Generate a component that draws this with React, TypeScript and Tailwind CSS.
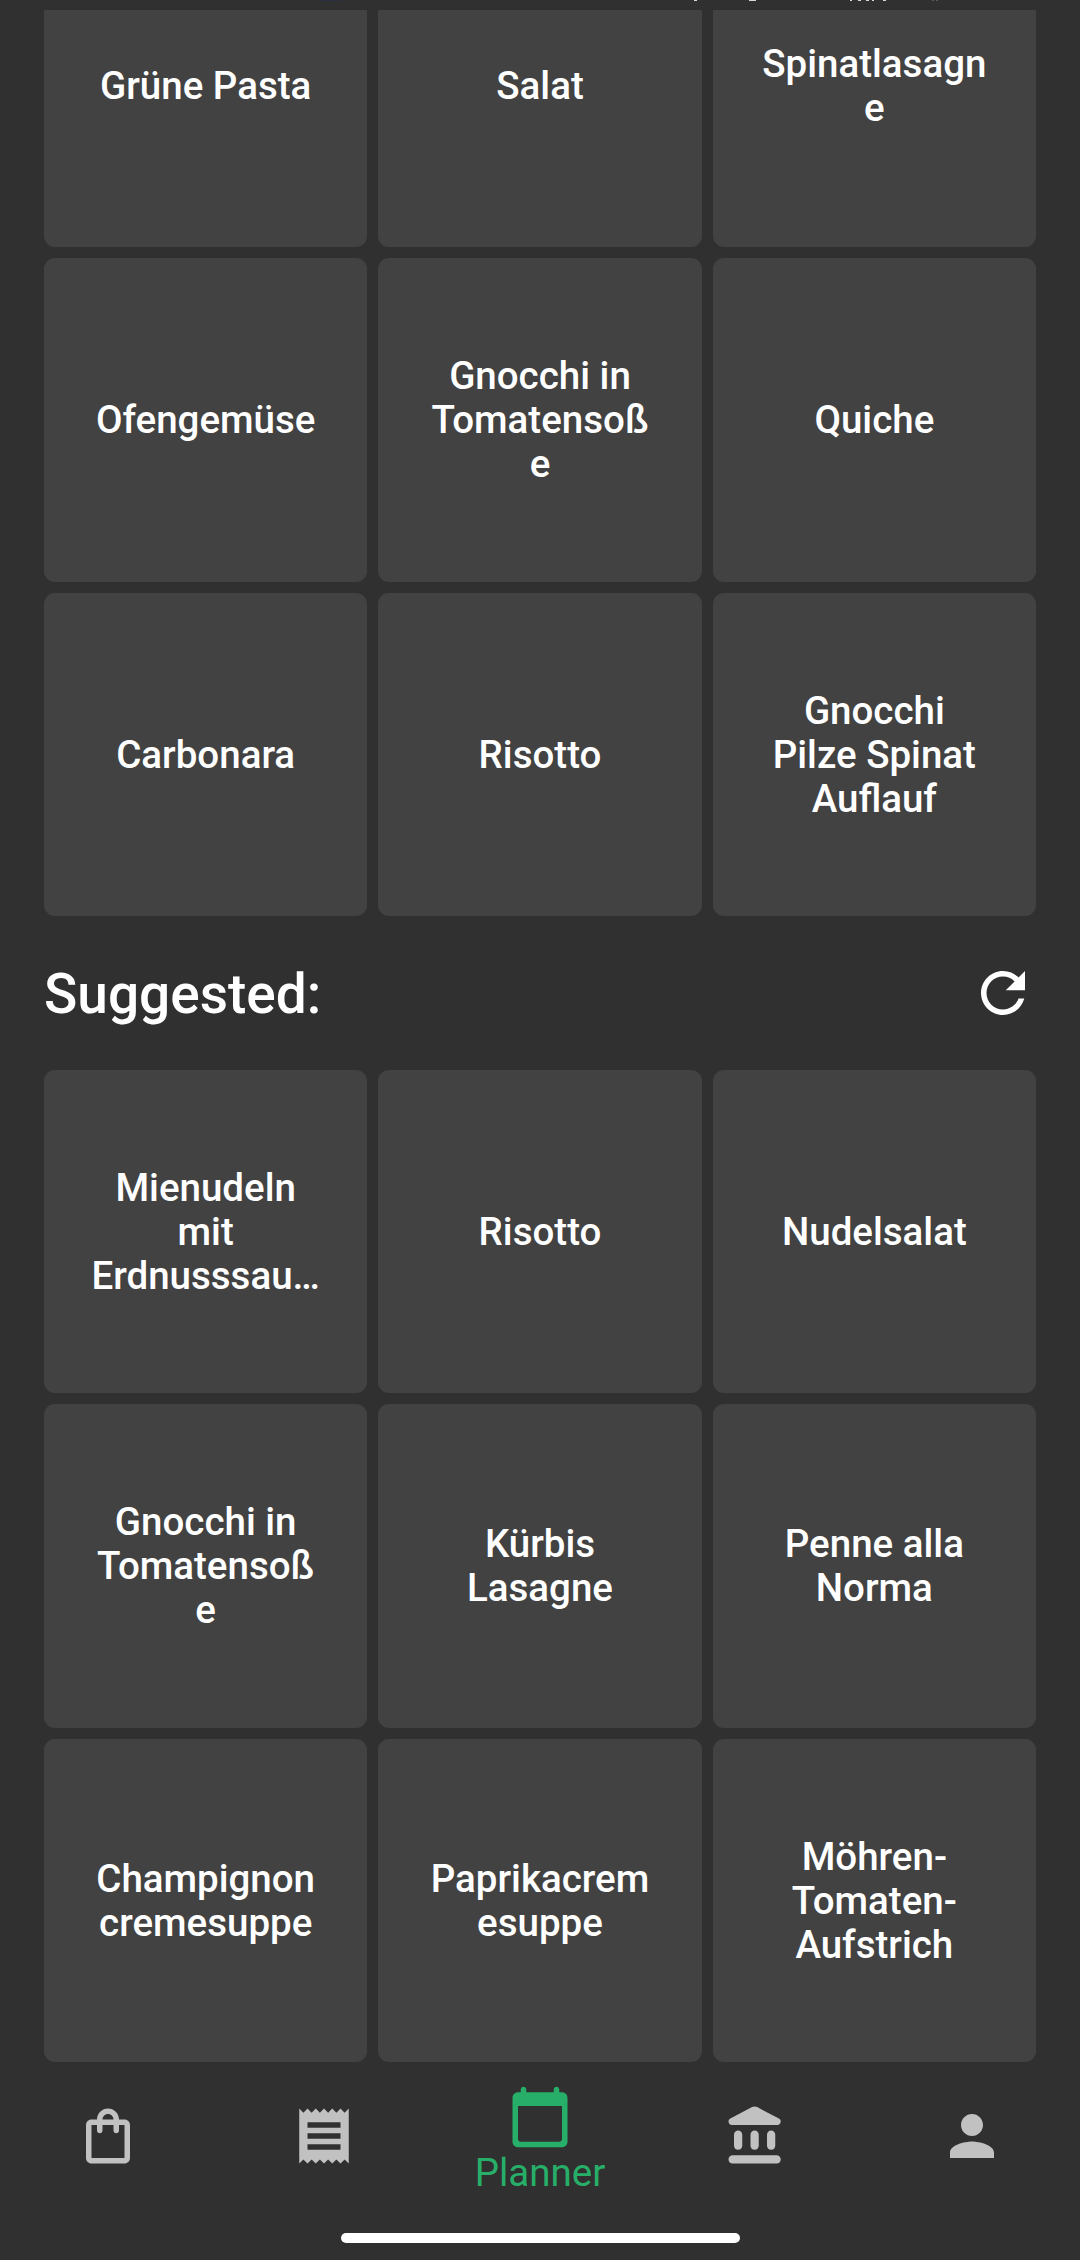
import React from "react";

const RECENT: string[][] = [
  ["Grüne Pasta"],
  ["Salat"],
  ["Spinatlasagn", "e"],
  ["Ofengemüse"],
  ["Gnocchi in", "Tomatensoß", "e"],
  ["Quiche"],
  ["Carbonara"],
  ["Risotto"],
  ["Gnocchi", "Pilze Spinat", "Auflauf"],
];

const SUGGESTED: string[][] = [
  ["Mienudeln", "mit", "Erdnusssau…"],
  ["Risotto"],
  ["Nudelsalat"],
  ["Gnocchi in", "Tomatensoß", "e"],
  ["Kürbis", "Lasagne"],
  ["Penne alla", "Norma"],
  ["Champignon", "cremesuppe"],
  ["Paprikacrem", "esuppe"],
  ["Möhren-", "Tomaten-", "Aufstrich"],
];

function Icon({ d, className = "" }: { d: string; className?: string }) {
  return (
    <svg viewBox="0 0 24 24" fill="currentColor" className={`size-[66px] shrink-0 ${className}`}>
      <path d={d} />
    </svg>
  );
}

const REFRESH =
  "M17.65 6.35C16.2 4.9 14.21 4 12 4c-4.42 0-7.99 3.58-7.99 8s3.57 8 7.99 8c3.73 0 6.84-2.55 7.73-6h-2.08c-.82 2.33-3.04 4-5.65 4-3.31 0-6-2.69-6-6s2.69-6 6-6c1.66 0 3.14.69 4.22 1.78L13 11h7V4l-2.35 2.35z";
const BAG =
  "M18 6h-2c0-2.21-1.79-4-4-4S8 3.79 8 6H6c-1.1 0-2 .9-2 2v12c0 1.1.9 2 2 2h12c1.1 0 2-.9 2-2V8c0-1.1-.9-2-2-2zm-6-2c1.1 0 2 .9 2 2h-4c0-1.1.9-2 2-2zm6 16H6V8h2v2c0 .55.45 1 1 1s1-.45 1-1V8h4v2c0 .55.45 1 1 1s1-.45 1-1V8h2v12z";
const RECEIPT =
  "M18 17H6v-2h12v2zm0-4H6v-2h12v2zm0-4H6V7h12v2zM3 22l1.5-1.5L6 22l1.5-1.5L9 22l1.5-1.5L12 22l1.5-1.5L15 22l1.5-1.5L18 22l1.5-1.5L21 22V2l-1.5 1.5L18 2l-1.5 1.5L15 2l-1.5 1.5L12 2l-1.5 1.5L9 2 7.5 3.5 6 2 4.5 3.5 3 2v20z";
const CALENDAR =
  "M20 3h-1V2c0-.55-.45-1-1-1s-1 .45-1 1v1H7V2c0-.55-.45-1-1-1s-1 .45-1 1v1H4c-1.1 0-2 .9-2 2v16c0 1.1.9 2 2 2h16c1.1 0 2-.9 2-2V5c0-1.1-.9-2-2-2zm-1 18H5c-.55 0-1-.45-1-1V8h16v12c0 .55-.45 1-1 1z";
const BANK =
  "M4 11.5v4c0 .83.67 1.5 1.5 1.5S7 16.33 7 15.5v-4c0-.83-.67-1.5-1.5-1.5S4 10.67 4 11.5zm6 0v4c0 .83.67 1.5 1.5 1.5s1.5-.67 1.5-1.5v-4c0-.83-.67-1.5-1.5-1.5s-1.5.67-1.5 1.5zM3.5 22h16c.83 0 1.5-.67 1.5-1.5s-.67-1.5-1.5-1.5h-16c-.83 0-1.5.67-1.5 1.5S2.67 22 3.5 22zM16 11.5v4c0 .83.67 1.5 1.5 1.5s1.5-.67 1.5-1.5v-4c0-.83-.67-1.5-1.5-1.5s-1.5.67-1.5 1.5zM10.57 1.49l-7.9 4.16c-.41.21-.67.64-.67 1.1C2 7.44 2.56 8 3.25 8h16.51C20.44 8 21 7.44 21 6.75c0-.46-.26-.89-.67-1.1l-7.9-4.16c-.58-.31-1.28-.31-1.86 0z";
const PERSON =
  "M12 12c2.21 0 4-1.79 4-4s-1.79-4-4-4-4 1.79-4 4 1.79 4 4 4zm0 2c-2.67 0-8 1.34-8 4v2h16v-2c0-2.66-5.33-4-8-4z";

function RecipeGrid({ items }: { items: string[][] }) {
  return (
    <div className="grid grid-cols-3 gap-[11px]">
      {items.map((lines, i) => (
        <div
          key={i}
          className="flex aspect-square flex-col items-center justify-center rounded-[11px] bg-[#424242] pt-[0.8px] text-[38.5px] leading-[44px] font-medium whitespace-nowrap"
        >
          {lines.map((line) => (
            <span key={line}>{line}</span>
          ))}
        </div>
      ))}
    </div>
  );
}

export default function App() {
  return (
    <div className="flex h-[2260px] w-[1080px] flex-col overflow-hidden bg-[#303030] font-[Roboto,sans-serif] text-white">
      {/* Lower edge of the status bar's marks, almost fully scrolled off */}
      <svg viewBox="0 0 1080 10" className="h-[10px] w-full shrink-0">
        <path d="M320 0h22v1h-22z" fill="#2b3044" />
        <path d="M694 0h3v1h-3zM749 0h7v1h-7zM850 0h2v1h-2zM858 0h3v1h-3zM866 0h3v1h-3zM872 0h2v1h-2zM883 0h3v1h-3z" fill="#d8d8d8" />
        <path d="M932 0h2v1h-2zM936 0h2v1h-2z" fill="#5c5c5c" />
      </svg>
      <main className="flex h-[2052px] shrink-0 flex-col justify-end overflow-hidden px-11">
        <RecipeGrid items={RECENT} />
        <div className="flex h-[154px] shrink-0 items-center justify-between">
          <h2 className="pt-[3px] text-[55px] leading-[64px] font-medium">Suggested:</h2>
          <button>
            <Icon d={REFRESH} />
          </button>
        </div>
        <RecipeGrid items={SUGGESTED} />
      </main>
      <nav className="grid h-[148px] shrink-0 grid-cols-5 justify-items-center pt-[22px] text-[#c1c1c1]">
        <Icon d={BAG} className="mt-[19px]" />
        <Icon d={RECEIPT} className="mt-[19px]" />
        <div className="flex flex-col items-center text-[#27ae68]">
          <Icon d={CALENDAR} />
          <span className="text-[38.5px] leading-[45px]">Planner</span>
        </div>
        <Icon d={BANK} className="mt-[19px]" />
        <Icon d={PERSON} className="mt-[19px]" />
      </nav>
      <div className="mt-[23px] h-[10px] w-[399px] shrink-0 self-center rounded-full bg-white" />
    </div>
  );
}
